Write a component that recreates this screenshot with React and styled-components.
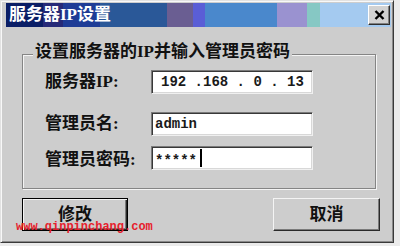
import React from "react";
import styled, { createGlobalStyle } from "styled-components";

const GlobalStyle = createGlobalStyle`
  html, body { margin: 0; padding: 0; }
  body {
    background: #ebebeb;
    width: 400px;
    height: 246px;
    overflow: hidden;
    font-family: "Liberation Serif", "Noto Sans CJK SC", serif;
  }
  * { box-sizing: border-box; }
`;

const Window = styled.div`
  position: relative;
  width: 394px;
  height: 243px;
  background: #cdcdcd;
  border-top: 1px solid #e2e2e2;
  border-left: 1px solid #e2e2e2;
  border-right: 1px solid #3a3a3a;
  border-bottom: 1px solid #3a3a3a;
  box-shadow: inset 1px 1px #f8f8f8, inset -1px -1px #8a8a8a;
  padding: 2px 2px 0 5px;
  display: flex;
  flex-direction: column;
`;

const TitleBar = styled.div`
  height: 24px;
  display: flex;
  align-items: center;
  justify-content: space-between;
  padding: 0 1px 0 3px;
  background: linear-gradient(
    to right,
    #0a1e66 0 37px,
    #262a78 37px 57px,
    #1e3c96 57px 94px,
    #2a5898 94px 161px,
    #6a5e92 161px 187px,
    #5a5ed6 187px 199px,
    #4a88cc 199px 271px,
    #9a92d0 271px 301px,
    #86c8c4 301px 314px,
    #a4caf0 314px 100%
  );
`;

const Title = styled.span`
  color: #fff;
  font-weight: 700;
  font-size: 17px;
  line-height: 20px;
`;

const CloseButton = styled.div`
  width: 22px;
  height: 20px;
  background: #d2d2d2;
  border: 1px solid;
  border-color: #ffffff #303030 #303030 #ffffff;
  box-shadow: inset -1px -1px #808080;
  display: flex;
  align-items: center;
  justify-content: center;
`;

const Content = styled.div`
  padding: 27px 11px 0 16px;
  display: flex;
  flex-direction: column;
`;

const GroupBox = styled.div`
  width: 354px;
  height: 135px;
  border: 1px solid #858585;
  box-shadow: inset 1px 1px #f4f4f4, 1px 1px #f4f4f4;
  padding: 0 0 0 22px;
  display: flex;
  flex-direction: column;
`;

const Caption = styled.div`
  margin: -13px 0 0 -12px;
  padding: 0 2px;
  width: fit-content;
  background: #cdcdcd;
  color: #111;
  font-size: 17px;
  line-height: 20px;
  font-weight: 600;
`;

const Row = styled.div`
  margin-top: ${(p) => p.$mt}px;
  display: grid;
  grid-template-columns: 106px 162px;
  align-items: center;
  height: 24px;
`;

const Label = styled.span`
  color: #111;
  font-size: 17px;
  line-height: 20px;
  font-weight: 600;
  position: relative;
  top: ${(p) => p.$dy || 0}px;
`;

const Field = styled.div`
  height: 24px;
  background: #fff;
  border: 1px solid;
  border-color: #7a7a7a #f0f0f0 #f0f0f0 #7a7a7a;
  box-shadow: inset 1px 1px #383838, inset -1px -1px #d8d8d8;
  display: flex;
  align-items: center;
  padding-left: ${(p) => p.$pl || 3}px;
  font-family: "Liberation Mono", monospace;
  font-size: 14px;
  font-weight: 700;
  color: #1a1a1a;
  white-space: pre;
`;

const Stars = styled.span`
  position: relative;
  top: 3px;
`;

const Caret = styled.span`
  display: inline-block;
  width: 2px;
  height: 18px;
  margin-left: 3px;
  background: #000;
`;

const Footer = styled.div`
  margin-top: 9px;
  display: flex;
  justify-content: space-between;
`;

const Button = styled.div`
  width: ${(p) => p.$w}px;
  height: 33px;
  display: flex;
  align-items: center;
  justify-content: center;
  padding-bottom: 4px;
  background: #cdcdcd;
  color: #111;
  font-size: 17px;
  font-weight: 600;
  border: 1px solid;
  border-color: ${(p) => (p.$default ? "#000" : "#f4f4f4 #2a2a2a #2a2a2a #f4f4f4")};
  box-shadow: ${(p) =>
    p.$default
      ? "inset 1px 1px #f4f4f4, inset -1px -1px #2a2a2a, inset -2px -2px #7a7a7a"
      : "inset -1px -1px #7a7a7a"};
`;

const Watermark = styled.span`
  position: absolute;
  left: 15px;
  top: 219px;
  font-family: "Liberation Mono", monospace;
  font-size: 12px;
  font-weight: 700;
  color: #e6202c;
  white-space: pre;
`;

const CloseIcon = () => (
  <svg width="11" height="10" viewBox="0 0 11 10">
    <path d="M1.5 1 L9.5 9 M9.5 1 L1.5 9" stroke="#000" strokeWidth="2.4" />
  </svg>
);

export default function App() {
  return (
    <>
      <GlobalStyle />
      <Window>
        <TitleBar>
          <Title>服务器IP设置</Title>
          <CloseButton>
            <CloseIcon />
          </CloseButton>
        </TitleBar>
        <Content>
          <GroupBox>
            <Caption>设置服务器的IP并输入管理员密码</Caption>
            <Row $mt={8}>
              <Label>服务器IP:</Label>
              <Field $pl={9}>192 .168 . 0 . 13</Field>
            </Row>
            <Row $mt={18}>
              <Label>管理员名:</Label>
              <Field>admin</Field>
            </Row>
            <Row $mt={10}>
              <Label $dy={2}>管理员密码:</Label>
              <Field>
                <Stars>*****</Stars>
                <Caret />
              </Field>
            </Row>
          </GroupBox>
          <Footer>
            <Button $w={106} $default>修改</Button>
            <Button $w={107}>取消</Button>
          </Footer>
        </Content>
        <Watermark>www.qinpinchang.com</Watermark>
      </Window>
    </>
  );
}
